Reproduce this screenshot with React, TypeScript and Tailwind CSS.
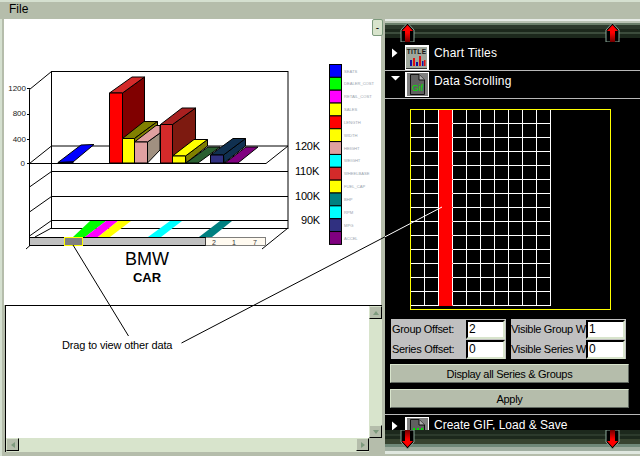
import React from 'react';

const legend = [
  ['#0000ff', 'SEATS'],
  ['#00ff00', 'DEALER_COST'],
  ['#ff00ff', 'RETAIL_COST'],
  ['#ffff00', 'SALES'],
  ['#ff0000', 'LENGTH'],
  ['#ffff00', 'WIDTH'],
  ['#e0a0a0', 'HEIGHT'],
  ['#00ffff', 'WEIGHT'],
  ['#d42a2a', 'WHEELBASE'],
  ['#ffff00', 'FUEL_CAP'],
  ['#008080', 'BHP'],
  ['#00ffff', 'RPM'],
  ['#303080', 'MPG'],
  ['#800080', 'ACCEL'],
];

// fill, points
const bars: [string, string][] = [
  ['#0000ff', '73,162 58,162.5 81,145 94,144.5'],
  ['#0000ff', '58,162.5 73,162 73,163 58,163'],
  ['#800000', '122.5,93 144.5,77 144.5,136 122.5,150'],
  ['#d42a2a', '109.5,93 132,77 144.5,77 122.5,93'],
  ['#ff0000', '109.5,93 122.5,93 122.5,163 109.5,163'],
  ['#808000', '122.5,138.5 144,121.5 157.5,121.5 134.5,138.5'],
  ['#808000', '134.5,138.5 157.5,121.5 157.5,128 134.5,146'],
  ['#ffff00', '122.5,138.5 134.5,138.5 134.5,163 122.5,163'],
  ['#a09080', '147.5,142 160,133 160,150 147.5,163'],
  ['#e0a0a0', '134.5,142 156,125.5 160,125.5 160,133 147.5,142'],
  ['#e0a0a0', '134.5,142 147.5,142 147.5,163 134.5,163'],
  ['#7d1a10', '172.5,124.5 195.5,108 195.5,140 172.5,157'],
  ['#a82020', '160.5,124.5 182,108 195.5,108 172.5,124.5'],
  ['#d42a2a', '160.5,124.5 172.5,124.5 172.5,163 160.5,163'],
  ['#808000', '185.5,156 207.5,139.5 207.5,146 186,163'],
  ['#ffff00', '172.5,156 194,139.5 207.5,139.5 185.5,156'],
  ['#ffff00', '172.5,156 185.5,156 185.5,163 172.5,163'],
  ['#2a6030', '186,163 208,147 220,147 198,163'],
  ['#103050', '223.5,155 245.5,138.5 245.5,146 224,163'],
  ['#103050', '210.5,155 233,138.5 245.5,138.5 223.5,155'],
  ['#303080', '210.5,155 223.5,155 223.5,163 210.5,163'],
  ['#800080', '225,163 246,147 258,147 238,163'],
];

const floorBars: [string, string][] = [
  ['#00ff00', '73,237 90,221 106,221 85,237'],
  ['#ff00ff', '85,237 106,221 118,221 98,237'],
  ['#ffff00', '98,237 118,221 131,221 110,237'],
  ['#00ffff', '148,237 170,221 182,221 161,237'],
  ['#008080', '199,237 220,221 232,221 212,237'],
];

function Chart() {
  return (
    <svg viewBox="4 19 377 286" className="block h-[286px] w-[377px]" fontFamily="'Liberation Sans', sans-serif">
      <g stroke="#000" strokeWidth="1" fill="none">
        <rect x="51.5" y="71.5" width="236.5" height="157" />
        <path d="M29.5 89.5 51.5 71.5M29.5 89.5V237M29.5 163.5H266M266 163.5 288 146M51.5 146H288" />
        <path d="M51.5 171.5H288M51.5 196.5H288M51.5 220.5H288" />
        <path d="M29.5 187 51.5 171.5M29.5 212 51.5 196.5M29.5 236 51.5 220.5M35 237 51.5 228M29.5 163.5 51.5 146" />
        <path d="M288 228 262 249M26 249 34 242" />
        <path d="M27 88.5H30M27 114.5H30M27 139.5H30M27 163.5H30" />
      </g>
      {floorBars.map(([fill, points]) => (
        <polygon key={fill + points} points={points} fill={fill} />
      ))}
      {bars.map(([fill, points]) => (
        <polygon key={fill + points} points={points} fill={fill} stroke="#000" strokeWidth="1" strokeLinejoin="round" />
      ))}
      <path d="M29.5 163.5H266" stroke="#000" />
      <rect x="29.5" y="237.5" width="176" height="8" fill="#c0c0c0" stroke="#000" />
      <rect x="205.5" y="237.5" width="60" height="8" fill="#fffaf0" stroke="#000" strokeWidth="0.5" />
      <rect x="64.5" y="237.5" width="18" height="8" fill="#808080" stroke="#ffff00" />
      <g fontSize="7" fill="#333" textAnchor="middle">
        <text x="214" y="244.5">2</text>
        <text x="234" y="244.5">1</text>
        <text x="255" y="244.5">7</text>
      </g>
      <g fontSize="8" fill="#222" textAnchor="end">
        <text x="26" y="91">1200</text>
        <text x="26" y="116">800</text>
        <text x="26" y="142">400</text>
        <text x="25" y="166">0</text>
      </g>
      <g fontSize="11" letterSpacing="-0.2" fill="#000">
        <text x="295" y="150">120K</text>
        <text x="295" y="175">110K</text>
        <text x="295" y="200">100K</text>
        <text x="301" y="224">90K</text>
      </g>
      <text x="147" y="265" fontSize="18" textAnchor="middle" fill="#000">BMW</text>
      <text x="147" y="282" fontSize="13" fontWeight="bold" textAnchor="middle" fill="#000">CAR</text>
      {legend.map(([color, label], i) => (
        <g key={label}>
          <rect x="329.5" y={64.5 + i * 12.85} width="12" height="12.85" fill={color} stroke="#000" />
          <text x="344" y={72.5 + i * 12.85} fontSize="4.1" fill="#9aa4ae">{label}</text>
        </g>
      ))}
    </svg>
  );
}

function ScrollBtn({ dir }: { dir: 'up' | 'down' | 'left' | 'right' }) {
  const points = {
    up: '2,7 8,7 5,3',
    down: '2,3 8,3 5,7',
    left: '7,2 7,8 3,5',
    right: '3,2 3,8 7,5',
  }[dir];
  return (
    <div className="flex h-[13px] w-[13px] shrink-0 items-center justify-center border-t border-l border-t-[#d8e4cc] border-l-[#d8e4cc] border-r border-b border-r-black border-b-black bg-[#b5bdab]">
      <svg width="10" height="10" viewBox="0 0 10 10">
        <polygon points={points} fill="#7d9a7d" />
      </svg>
    </div>
  );
}

function TextArea() {
  return (
    <div className="ml-px flex h-[147px] w-[377px] flex-col border-t border-l border-black">
      <div className="flex h-[132px]">
        <div className="flex-1 bg-white pl-[56px] pt-[32px] text-[11px] leading-[14px] tracking-[-0.15px] text-black">Drag to view other data</div>
        <div className="flex w-[13px] flex-col justify-between bg-[#d8e4cc]">
          <ScrollBtn dir="up" />
          <ScrollBtn dir="down" />
        </div>
      </div>
      <div className="flex h-[14px]">
        <div className="flex flex-1 justify-between bg-[#d8e4cc]">
          <ScrollBtn dir="left" />
          <ScrollBtn dir="right" />
        </div>
        <div className="w-[13px] bg-[#b5bdab]"></div>
      </div>
    </div>
  );
}

function Arrow({ down = false, x }: { down?: boolean; x: string }) {
  const id = down ? 'arrow-down' : 'arrow-up';
  return (
    <svg
      width="15"
      height="19"
      viewBox="0 0 15 19"
      className={`absolute ${x} ${down ? 'top-[430px] rotate-180' : 'top-[23px]'}`}
    >
      <defs>
        <linearGradient id={id} x1="0" y1="0" x2="0" y2="1">
          <stop offset="0.45" stopColor="#ff0000" />
          <stop offset="1" stopColor="#700000" />
        </linearGradient>
      </defs>
      <polygon points="1,19 1,7 7.5,0 14,7 14,19" fill="#000" stroke="#8aa898" strokeWidth="1" />
      <polygon points="2,8 7.5,2 13,8 10,8 10,19 5,19 5,8" fill={`url(#${id})`} />
    </svg>
  );
}

function TitleIcon() {
  return (
    <svg width="24" height="25" viewBox="0 0 24 25" className="shrink-0" fontFamily="'Liberation Sans', sans-serif">
      <rect width="24" height="25" fill="#fff" />
      <rect x="1" y="2" width="21" height="22" fill="#a0a89c" />
      <text x="11.5" y="8.5" fontSize="6.5" fontWeight="bold" textAnchor="middle" letterSpacing="0.3" fill="#111">TITLE</text>
      <path d="M5 21V15H7V21ZM11 21V17H13V21ZM17 21V16H18.5V21Z" fill="#1010a0" />
      <path d="M8 21V13H10V21ZM14 21V11H16V21ZM19 21V15H20.5V21Z" fill="#e01010" />
      <path d="M1 23.5H22" stroke="#333" />
    </svg>
  );
}

function GifIcon({ dots = false }: { dots?: boolean }) {
  return (
    <svg width="24" height="25" viewBox="0 0 24 25" className="shrink-0" fontFamily="'Liberation Sans', sans-serif">
      <rect width="24" height="25" fill="#fff" />
      <rect x="2" y="1" width="21" height="23" fill="#808080" />
      <path d="M5.5 2.5H14L19.5 8V22.5H5.5Z" fill="#606060" stroke="#111" />
      <path d="M14 2.5V8H19.5" fill="#b0b0b0" stroke="#111" />
      {dots ? (
        <path d="M8 12H10M12 12H14M16 12H18" stroke="#00e000" strokeWidth="2" />
      ) : (
        <text x="12.5" y="19" fontSize="9" textAnchor="middle" fill="#00e000">Gif</text>
      )}
    </svg>
  );
}

type RowProps = {
  open?: boolean;
  icon: React.ReactNode;
  label: string;
  className: string;
  triClass: string;
  iconClass: string;
  textClass: string;
};

function SectionRow({ open, icon, label, className, triClass, iconClass, textClass }: RowProps) {
  return (
    <div className={`flex items-start ${className}`}>
      <div className="flex w-[20px] pl-[7px]">
        <svg width="11" height="11" viewBox="0 0 11 11" className={`shrink-0 ${triClass}`}>
          <polygon points={open ? '1,2 10,2 5.5,6.5' : '0,0.5 5.5,5 0,9.5'} fill="#fff" />
        </svg>
      </div>
      <div className={iconClass}>{icon}</div>
      <span className={`ml-[5px] whitespace-nowrap text-[12px] leading-[14px] text-white ${textClass}`}>{label}</span>
    </div>
  );
}

function OffsetField({ label, value }: { label: string; value: string }) {
  return (
    <div className="flex h-[20px] items-center">
      <span className="flex-1 whitespace-nowrap text-[11px] leading-[14px] tracking-[-0.3px] text-black">{label}</span>
      <input
        readOnly
        value={value}
        className="h-[19px] w-[39px] border-2 border-t-black border-l-black border-r-[#d8e4cc] border-b-[#d8e4cc] bg-white pl-px text-[12px] text-black outline-none"
      />
    </div>
  );
}

function PanelButton({ label }: { label: string }) {
  return (
    <button className="h-[19px] w-[239px] border border-t-[#d8e4cc] border-l-[#d8e4cc] border-r-[#606860] border-b-[#606860] bg-[#b5bdab] text-center text-[11px] leading-[14px] tracking-[-0.3px] text-black">
      {label}
    </button>
  );
}

export default function App() {
  const cells = Array.from({ length: 140 }, (_, i) => i);

  return (
    <div className="relative flex h-[456px] w-[640px] flex-col overflow-hidden bg-[#b5bdab] font-['Liberation_Sans',sans-serif]">
      <div className="h-[19px] shrink-0 border-t-2 border-[#d5e0d0] pl-[9px] text-[12px] leading-[15px] text-black">File</div>

      <div className="flex min-h-0 flex-1">
        {/* left side: chart and text box */}
        <div className="w-[385px] shrink-0 border-l-2 border-[#d5e0d0] pl-[2px]">
          <div className="h-[286px] w-[377px] bg-white">
            <Chart />
          </div>
          <TextArea />
        </div>

        {/* right side: control panel */}
        <div className="flex min-w-0 flex-1 flex-col bg-black">
          <div className="h-[22px] shrink-0 bg-[linear-gradient(to_bottom,#e6ebe6_0,#e6ebe6_2px,#bac4b4_2px,#bac4b4_4px,#6a7f6a_4px,#6a7f6a_6px,#2c3a2c_6px,#2c3a2c_10px,#1c281c_10px,#1c281c_13px,#3c4c3c_13px,#3c4c3c_15px,#1c281c_15px,#1c281c_19px,#000_19px)]"></div>
          <div className="min-h-0 flex-1 overflow-hidden">
            <SectionRow
              icon={<TitleIcon />}
              label="Chart Titles"
              className="h-[30px] border-b border-[#b8b8b8]"
              triClass="mt-[7px]"
              iconClass="mt-[4px]"
              textClass="mt-[5px] tracking-[0.2px]"
            />
            <SectionRow
              open
              icon={<GifIcon />}
              label="Data Scrolling"
              className="h-[28px] border-b border-[#b8b8b8]"
              triClass="mt-[3px] -ml-[2px]"
              iconClass="mt-px"
              textClass="mt-[3px] tracking-[0.2px]"
            />

            <div className="ml-[25px] mt-[10px] h-[201px] w-[201px] border border-[#ffff00]">
              <div className="grid grid-cols-[repeat(10,14px)] grid-rows-[repeat(14,14px)]">
                {cells.map((i) => (
                  <div
                    key={i}
                    className={i % 10 === 2 ? 'border-r border-b border-r-white border-b-[#ff0000] bg-[#ff0000]' : 'border-r border-b border-white'}
                  ></div>
                ))}
              </div>
            </div>

            <div className="ml-[6px] mt-[9px] flex gap-[5px]">
              <div className="flex h-[40px] w-[115px] flex-col bg-[#c0c0c0] pl-px pr-px">
                <OffsetField label="Group Offset:" value="2" />
                <OffsetField label="Series Offset:" value="0" />
              </div>
              <div className="flex h-[40px] w-[115px] flex-col bg-[#c0c0c0] pr-px">
                <OffsetField label="Visible Group W" value="1" />
                <OffsetField label="Visible Series W" value="0" />
              </div>
            </div>

            <div className="ml-[5px] mt-[5px] flex flex-col gap-[6px]">
              <PanelButton label="Display all Series & Groups" />
              <PanelButton label="Apply" />
            </div>

            <div className="mt-[6px] border-t border-[#b8b8b8]">
              <SectionRow
                icon={<GifIcon dots />}
                label="Create GIF, Load & Save"
                className="h-[29px]"
                triClass="mt-[6px]"
                iconClass="mt-[2px]"
                textClass="mt-[3px]"
              />
            </div>
          </div>
          <div className="h-[26px] shrink-0 bg-[linear-gradient(to_bottom,#1c281c_0,#1c281c_4px,#2c3a2c_4px,#2c3a2c_6px,#1c281c_6px,#1c281c_9px,#37432f_9px,#37432f_14px,#6f8878_14px,#6f8878_17px,#a0aea0_17px,#a0aea0_21px,#e0e8e0_21px,#e0e8e0_24px,#b5bdab_24px)]"></div>
        </div>
      </div>

      <Arrow x="left-[400px]" />
      <Arrow x="left-[605px]" />
      <Arrow down x="left-[400px]" />
      <Arrow down x="left-[605px]" />

      {/* collapse button on the splitter */}
      <div className="absolute left-[372px] top-[19px] flex h-[17px] w-[11px] items-center justify-center rounded-[2px] border border-[#7d9a7d] bg-[#d8e4cc] text-[10px] leading-none text-black">-</div>

      {/* leader lines from the note to the chart handle and the red column */}
      <svg className="pointer-events-none absolute left-0 top-0 h-[456px] w-[640px]" viewBox="0 0 640 456">
        <path d="M73 245 128.5 336M181.5 343 385 236.8" stroke="#000" fill="none" />
        <path d="M385 236.8 442 207" stroke="#fff" fill="none" />
      </svg>
    </div>
  );
}
